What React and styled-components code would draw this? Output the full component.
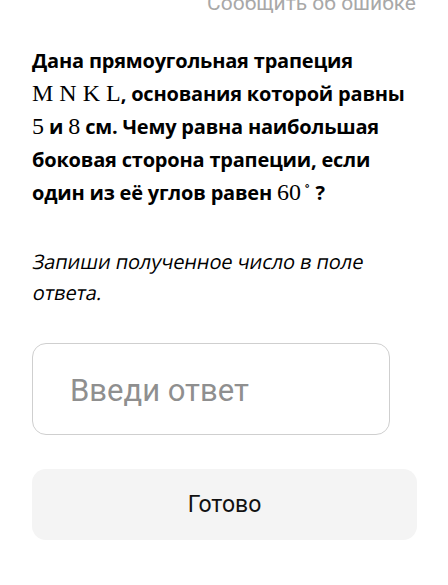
import React from 'react'
import styled, { createGlobalStyle } from 'styled-components'

const GlobalStyle = createGlobalStyle`
  html, body {
    margin: 0;
    padding: 0;
    background: #fff;
  }
  body {
    font-family: "Open Sans", "Noto Sans", sans-serif;
    color: #000;
    overflow: hidden;
  }
`

const StyledPage = styled.div`
  width: 448px;
  height: 585px;
  padding: 0 32px;
  box-sizing: border-box;
  display: flex;
  flex-direction: column;
`
const StyledTopBar = styled.div`
  display: flex;
  justify-content: flex-end;
  margin-top: -9px;
  height: 24px;
`
const StyledReport = styled.span`
  font-family: Roboto, "Noto Sans", sans-serif;
  font-size: 21px;
  line-height: 24px;
  color: #a8a8a8;
`
const StyledQuestion = styled.p`
  margin: 29px 0 0 0;
  padding-right: 10px;
  font-size: 20px;
  font-weight: 700;
  line-height: 33px;
  letter-spacing: -0.2px;
`
const StyledMath = styled.span`
  font-family: "Liberation Serif", "DejaVu Serif", serif;
  font-weight: 400;
  font-size: 24px;
  letter-spacing: ${(p) => (p.$spaced ? '6px' : '0')};
  margin-right: ${(p) => (p.$spaced ? '-6px' : '0')};
`
const StyledDegree = styled.sup`
  font-size: 13px;
  vertical-align: 10px;
  line-height: 0;
  margin-left: 3px;
`
const StyledHint = styled.p`
  margin: 37px 0 0 0;
  font-size: 20px;
  line-height: 31px;
  letter-spacing: -0.1px;
`
/* the reference slants the upright face instead of using the italic one */
const StyledHintLine = styled.span`
  display: block;
  transform: skewX(-11deg);
  transform-origin: left 70%;
`
const StyledInputBox = styled.div`
  margin-top: 35px;
  width: 358px;
  height: 92px;
  box-sizing: border-box;
  border: 1px solid #cfcfcf;
  border-radius: 14px;
  display: flex;
  align-items: center;
  padding-left: 37px;
`
const StyledInput = styled.input`
  border: none;
  outline: none;
  background: transparent;
  width: 100%;
  font-family: Roboto, "Noto Sans", sans-serif;
  font-size: 31px;
  color: #000;
  padding: 0;
  margin-top: 2px;
  &::placeholder {
    color: #8f8f8f;
  }
`
const StyledButton = styled.button`
  margin-top: 34px;
  width: 385px;
  height: 71px;
  border: none;
  border-radius: 14px;
  background: #f4f4f4;
  font-family: Roboto, "Noto Sans", sans-serif;
  font-size: 23px;
  color: #111;
  cursor: pointer;
`

const App = () => {
  return (
    <>
      <GlobalStyle />
      <StyledPage>
        <StyledTopBar>
          <StyledReport>Сообщить об ошибке</StyledReport>
        </StyledTopBar>
        <StyledQuestion>
          Дана прямоугольная трапеция <StyledMath $spaced>MNKL</StyledMath>,
          основания которой равны <StyledMath>5</StyledMath> и{' '}
          <StyledMath>8</StyledMath> см. Чему равна наибольшая боковая сторона
          трапеции, если один из её углов равен{' '}
          <StyledMath>
            60<StyledDegree>∘</StyledDegree>
          </StyledMath>{' '}
          ?
        </StyledQuestion>
        <StyledHint>
          <StyledHintLine>Запиши полученное число в поле</StyledHintLine>
          <StyledHintLine>ответа.</StyledHintLine>
        </StyledHint>
        <StyledInputBox>
          <StyledInput placeholder="Введи ответ" />
        </StyledInputBox>
        <StyledButton>Готово</StyledButton>
      </StyledPage>
    </>
  )
}

export default App
